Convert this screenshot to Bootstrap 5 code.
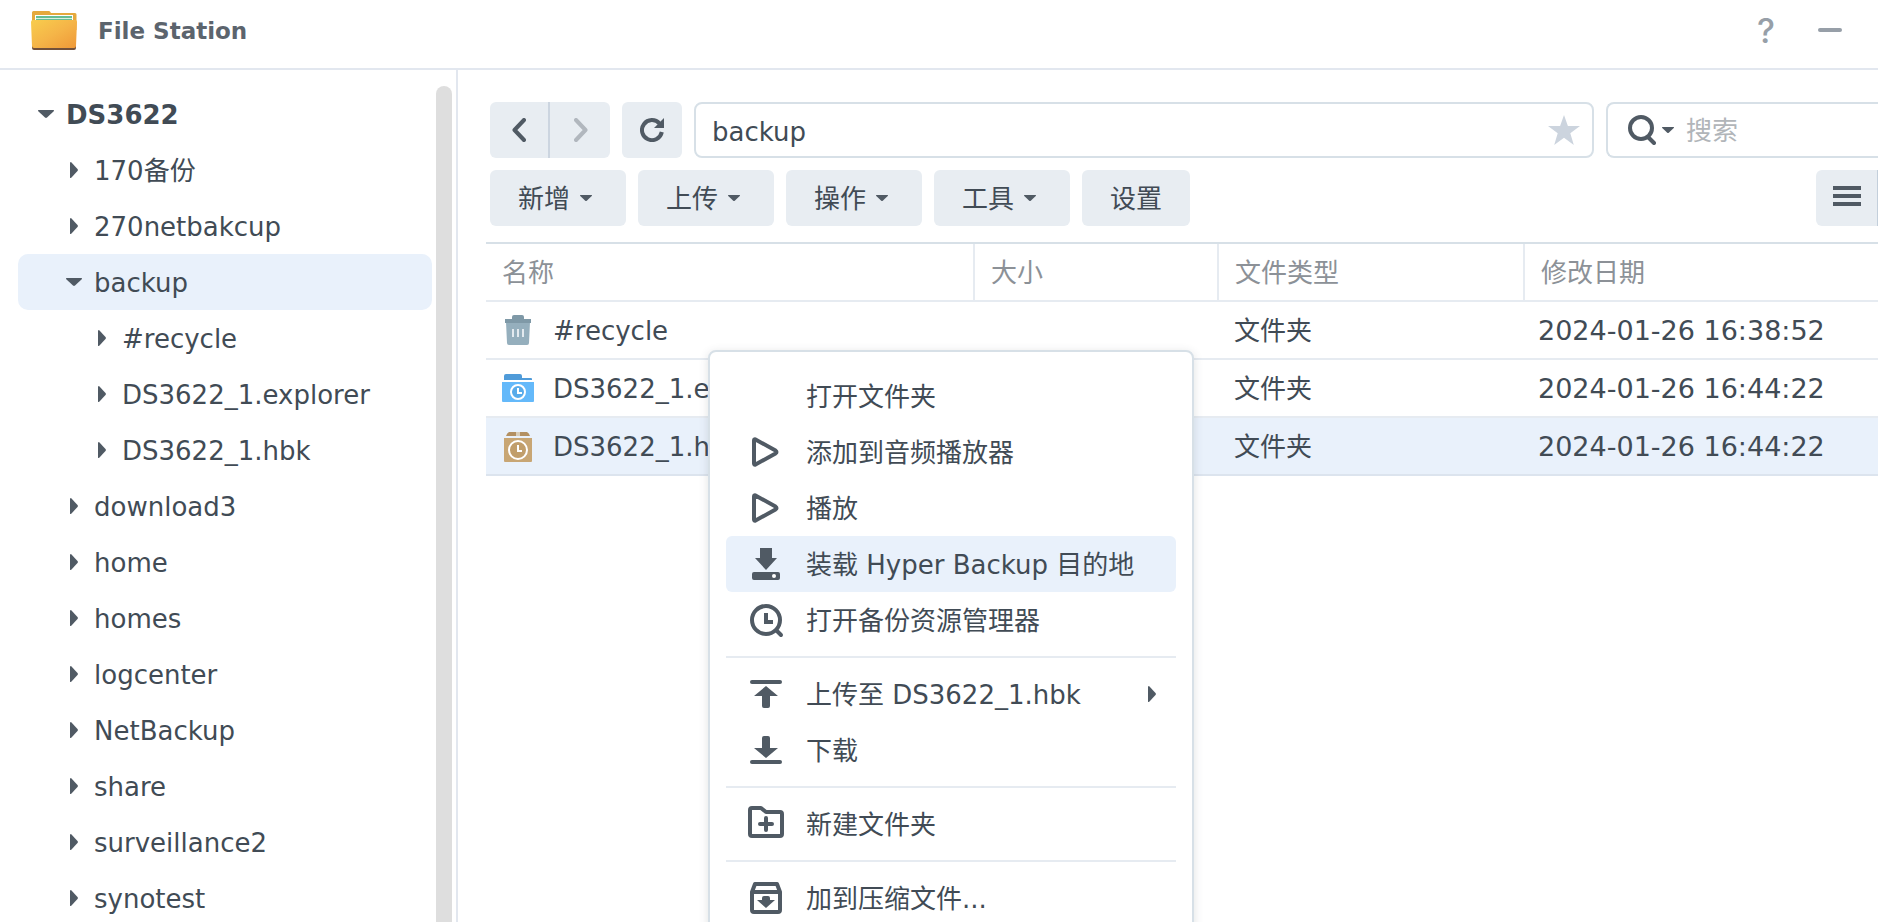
<!DOCTYPE html>
<html lang="zh-CN">
<head>
<meta charset="utf-8">
<meta name="viewport" content="width=device-width, initial-scale=1">
<title>File Station</title>
<link href="https://cdn.jsdelivr.net/npm/bootstrap@5.3.0/dist/css/bootstrap.min.css" rel="stylesheet">
<style>
  :root { --ink: #414b55; --icon: #505a64; --line: #e6ebf1; --frame: #d7e0e7; --face: #e8edf2; --pick: #e9f1fb; }
  body { font-family: "DejaVu Sans", "Noto Sans CJK SC", sans-serif; font-size: 26px; line-height: 36px; color: var(--ink); background: #fff; }
  button { font: inherit; color: inherit; }
  svg { display: block; flex: none; }

  .titlebar { padding: 0 36px 8px 30px; height: 70px; border-bottom: 2px solid #e2e7ef; gap: 20px; }
  .app-name { font-size: 23px; font-weight: 700; color: #5c646d; padding-top: 2px; }
  .win-btns { gap: 40px; }
  .win-btns button { width: 24px; }
  .win-btns .help-btn { font-family: Inter, sans-serif; font-size: 34px; font-weight: 500; color: #979fa8; }

  .sidebar { width: 458px; border-right: 2px solid #e2e7ef; padding: 16px 4px 0 18px; gap: 4px; }
  .tree a { height: 56px; border-radius: 10px; padding: 2px 0 0 14px; gap: 6px; color: inherit; }
  .tree a.depth1 { padding-left: 42px; }
  .tree a.depth2 { padding-left: 70px; }
  .tree a.picked { background: var(--pick); }
  .twist { width: 28px; }
  .track { width: 16px; border-radius: 8px 8px 0 0; background: #dedede; }
  .tree svg, .tool svg, .ctx svg, .fname svg { margin-bottom: 2px; }

  .pane { padding: 32px 0 0 28px; }
  .bar { gap: 12px; padding-left: 4px; margin-bottom: 12px; }
  .tool { height: 56px; border: 0; border-radius: 6px; background: var(--face); padding: 2px 28px 0; gap: 10px; display: flex; align-items: center; justify-content: center; }
  .tool.menu-tool { padding-right: 34px; }
  .tool.square { width: 60px; padding: 2px 0 0; }
  .tool.back { border-right: 2px solid #ccd5e0; border-radius: 6px 0 0 6px; }
  .tool.next { padding-left: 2px; border-radius: 0 6px 6px 0; }
  .tool.view { width: 62px; padding: 2px 0 0; border-right: 1px solid #c3cfdb; border-radius: 6px 0 0 6px; }
  .field { height: 56px; border: 2px solid var(--frame); border-radius: 8px; }
  .field input { border: 0; outline: 0; background: none; color: inherit; padding: 2px 0 0; min-width: 0; }
  .field input::placeholder { color: #b1b5b9; opacity: 1; }
  .path-field { padding: 0 12px 0 16px; }
  .path-field input { padding-top: 4px; }
  .search-field { width: 272px; border-right: 0; border-radius: 8px 0 0 8px; padding-left: 20px; }
  .search-btn { gap: 6px; margin-right: 12px; }

  .files { table-layout: fixed; border-collapse: separate; border-spacing: 0; margin: 16px 0 0; border-top: 2px solid var(--frame); }
  .files th { height: 58px; padding: 2px 0 0 16px; font-weight: 400; color: #8c9197; border-bottom: 2px solid var(--line); border-right: 2px solid var(--line); }
  .files th:last-child { border-right: 0; }
  .files td { height: 58px; padding: 2px 0 0 15px; border-bottom: 2px solid var(--line); color: inherit; }
  .files td:first-child { padding-left: 16px; }
  .files td.stamp { font-size: 27px; padding-left: 13px; }
  .files tr.picked td { background: var(--pick); border-color: #dce4ee; }
  .col-name { width: 489px; } .col-size { width: 244px; } .col-type { width: 306px; }
  .fname { gap: 19px; }

  .ctx { left: 250px; top: 280px; width: 486px; padding: 16px; border: 2px solid var(--frame); border-radius: 8px; background: #fff; box-shadow: 0 2px 10px rgba(60, 70, 80, .16); }
  .ctx button { height: 56px; width: 100%; border: 0; background: none; border-radius: 6px; padding: 2px 20px 0 22px; gap: 22px; display: flex; align-items: center; text-align: left; }
  .ctx button.picked { background: var(--pick); }
  .ctx hr { margin: 8px 0; border-top: 2px solid var(--line); opacity: 1; }
  .ctx .glyph { width: 36px; height: 36px; color: var(--icon); }
</style>
</head>
<body class="vh-100 overflow-hidden d-flex flex-column">
<svg width="0" height="0" class="position-absolute" aria-hidden="true">
  <symbol id="right" viewBox="0 0 8 16"><path fill="#505a64" d="M0 0.500Q0 0 1 0L7.500 7Q8.300 8 7.500 9L1 16Q0 16 0 15.500Z"/></symbol>
  <symbol id="down" viewBox="0 0 16 8"><path fill="#505a64" d="M.5 0H15.500Q16 0 16 1L9 7.500Q8 8.300 7 7.500L0 1Q0 0 .5 0Z"/></symbol>
  <symbol id="play" viewBox="0 0 36 36"><path fill="none" stroke="currentColor" stroke-width="4" stroke-linejoin="round" d="M6 6.500Q6 5 7.500 5.500L27.500 16.500Q29.500 18 27.500 19.500L7.500 30.500Q6 31 6 29.500Z"/></symbol>
</svg>

<header class="titlebar d-flex align-items-center flex-shrink-0">
  <svg width="48" height="44" viewBox="0 0 48 44" aria-hidden="true">
    <defs><linearGradient id="fold" x1="0" y1="0" x2="1" y2="1"><stop offset="0" stop-color="#f8cd4d"/><stop offset=".5" stop-color="#f5b548"/><stop offset="1" stop-color="#ef9838"/></linearGradient></defs>
    <path fill="#e5a93d" d="M2 4.500Q2 3 3.500 3H19Q20 3 21 5H45Q46.500 5 46.500 6.500V22H2Z"/>
    <path fill="#fff" d="M5 7H43V14H5Z"/><path fill="#67bd93" d="M6 8H42V14H6Z"/><path fill="#d9f0df" d="M6 10H42V11H6Z"/>
    <path fill="#72503a" d="M2 38H46V40Q46 42 44 42H4Q2 42 2 40Z"/>
    <path fill="url(#fold)" d="M1 14Q1 12 3 12H45Q47 12 47 14L46 38Q46 40 44 40H4Q2 40 2 38Z"/>
  </svg>
  <span class="app-name">File Station</span>
  <div class="win-btns d-flex align-items-center ms-auto">
    <button class="help-btn btn p-0 border-0" type="button" aria-label="Help">?</button>
    <button class="btn p-0 border-0" type="button" aria-label="Minimize"><svg width="24" height="4"><rect width="24" height="4" rx="2" fill="#979fa8"/></svg></button>
  </div>
</header>

<div class="d-flex flex-grow-1 overflow-hidden">
  <aside class="sidebar d-flex flex-shrink-0 overflow-hidden">
    <nav class="tree d-flex flex-column flex-grow-1">
      <a href="#" class="d-flex align-items-center flex-shrink-0 text-decoration-none fw-bold"><svg class="twist" height="8"><use href="#down" x="6" width="16" height="8"/></svg>DS3622</a>
      <a href="#" class="depth1 d-flex align-items-center flex-shrink-0 text-decoration-none"><svg class="twist" height="16"><use href="#right" x="10" width="8" height="16"/></svg>170备份</a>
      <a href="#" class="depth1 d-flex align-items-center flex-shrink-0 text-decoration-none"><svg class="twist" height="16"><use href="#right" x="10" width="8" height="16"/></svg>270netbakcup</a>
      <a href="#" class="depth1 picked d-flex align-items-center flex-shrink-0 text-decoration-none"><svg class="twist" height="8"><use href="#down" x="6" width="16" height="8"/></svg>backup</a>
      <a href="#" class="depth2 d-flex align-items-center flex-shrink-0 text-decoration-none"><svg class="twist" height="16"><use href="#right" x="10" width="8" height="16"/></svg>#recycle</a>
      <a href="#" class="depth2 d-flex align-items-center flex-shrink-0 text-decoration-none"><svg class="twist" height="16"><use href="#right" x="10" width="8" height="16"/></svg>DS3622_1.explorer</a>
      <a href="#" class="depth2 d-flex align-items-center flex-shrink-0 text-decoration-none"><svg class="twist" height="16"><use href="#right" x="10" width="8" height="16"/></svg>DS3622_1.hbk</a>
      <a href="#" class="depth1 d-flex align-items-center flex-shrink-0 text-decoration-none"><svg class="twist" height="16"><use href="#right" x="10" width="8" height="16"/></svg>download3</a>
      <a href="#" class="depth1 d-flex align-items-center flex-shrink-0 text-decoration-none"><svg class="twist" height="16"><use href="#right" x="10" width="8" height="16"/></svg>home</a>
      <a href="#" class="depth1 d-flex align-items-center flex-shrink-0 text-decoration-none"><svg class="twist" height="16"><use href="#right" x="10" width="8" height="16"/></svg>homes</a>
      <a href="#" class="depth1 d-flex align-items-center flex-shrink-0 text-decoration-none"><svg class="twist" height="16"><use href="#right" x="10" width="8" height="16"/></svg>logcenter</a>
      <a href="#" class="depth1 d-flex align-items-center flex-shrink-0 text-decoration-none"><svg class="twist" height="16"><use href="#right" x="10" width="8" height="16"/></svg>NetBackup</a>
      <a href="#" class="depth1 d-flex align-items-center flex-shrink-0 text-decoration-none"><svg class="twist" height="16"><use href="#right" x="10" width="8" height="16"/></svg>share</a>
      <a href="#" class="depth1 d-flex align-items-center flex-shrink-0 text-decoration-none"><svg class="twist" height="16"><use href="#right" x="10" width="8" height="16"/></svg>surveillance2</a>
      <a href="#" class="depth1 d-flex align-items-center flex-shrink-0 text-decoration-none"><svg class="twist" height="16"><use href="#right" x="10" width="8" height="16"/></svg>synotest</a>
    </nav>
    <div class="track"></div>
  </aside>

  <main class="pane position-relative flex-grow-1">
    <div class="bar d-flex">
      <div class="d-flex">
        <button type="button" class="tool square back" aria-label="Back"><svg width="14" height="24" viewBox="0 0 14 24"><path d="M12 2L2.500 12L12 22" fill="none" stroke="#505a64" stroke-width="4" stroke-linecap="round" stroke-linejoin="round"/></svg></button>
        <button type="button" class="tool square next" aria-label="Forward"><svg width="14" height="24" viewBox="0 0 14 24"><path d="M2 2L11.500 12L2 22" fill="none" stroke="#b1b7be" stroke-width="4" stroke-linecap="round" stroke-linejoin="round"/></svg></button>
      </div>
      <button type="button" class="tool square" aria-label="Refresh"><svg width="24" height="24" viewBox="0 0 24 24"><path d="M19.500 5.500A10 10 0 1 0 21.800 14" fill="none" stroke="#505a64" stroke-width="4"/><path d="M24 0V10H14Z" fill="#505a64"/></svg></button>
      <div class="field path-field d-flex align-items-center flex-grow-1">
        <input class="flex-grow-1" type="text" value="backup" aria-label="Path">
        <button type="button" class="btn p-0 border-0" aria-label="Favorite"><svg width="32" height="30" viewBox="0 0 32 30"><path fill="#ccd4de" d="M16 0L19.900 11H32L22.300 18.200L25.800 30L16 22.800L6.200 30L9.700 18.200L0 11H12.100Z"/></svg></button>
      </div>
      <div class="field search-field d-flex align-items-center flex-shrink-0">
        <button type="button" class="search-btn btn p-0 border-0 d-flex align-items-center" aria-label="Search options">
          <svg width="28" height="30" viewBox="0 0 28 30"><circle cx="13" cy="13" r="11" fill="none" stroke="#505a64" stroke-width="4"/><path d="M21 23L26 28" stroke="#505a64" stroke-width="4" stroke-linecap="round"/></svg>
          <svg width="12" height="6"><use href="#down" width="12" height="6"/></svg>
        </button>
        <input class="flex-grow-1" type="text" placeholder="搜索" aria-label="搜索">
      </div>
    </div>
    <div class="bar d-flex">
      <button type="button" class="tool menu-tool">新增<svg width="12" height="6"><use href="#down" width="12" height="6"/></svg></button>
      <button type="button" class="tool menu-tool">上传<svg width="12" height="6"><use href="#down" width="12" height="6"/></svg></button>
      <button type="button" class="tool menu-tool">操作<svg width="12" height="6"><use href="#down" width="12" height="6"/></svg></button>
      <button type="button" class="tool menu-tool">工具<svg width="12" height="6"><use href="#down" width="12" height="6"/></svg></button>
      <button type="button" class="tool">设置</button>
      <button type="button" class="tool view ms-auto" aria-label="List view"><svg width="28" height="24" viewBox="0 0 28 24"><path fill="#505a64" d="M0 0H28V4H0ZM0 8H28V12H0ZM0 16H28V20H0Z"/></svg></button>
    </div>

    <table class="files w-100">
      <colgroup><col class="col-name"><col class="col-size"><col class="col-type"><col></colgroup>
      <thead><tr><th>名称</th><th>大小</th><th>文件类型</th><th>修改日期</th></tr></thead>
      <tbody>
        <tr>
          <td><div class="fname d-flex align-items-center">
            <svg width="32" height="32" viewBox="0 0 32 32"><path fill="#95afbd" d="M4 8H28L27 29Q27 31 25 31H7Q5 31 5 29Z"/><path fill="#7f99a7" d="M3 5H10V3Q10 1 12 1H20Q22 1 22 3V5H29V9H3Z"/><path fill="#e3eaef" d="M10 15H12V23H10ZM15 15H17V23H15ZM20 15H22V23H20Z"/></svg>
            #recycle</div></td>
          <td></td><td>文件夹</td><td class="stamp">2024-01-26 16:38:52</td>
        </tr>
        <tr>
          <td><div class="fname d-flex align-items-center">
            <svg width="32" height="32" viewBox="0 0 32 32"><path fill="#4f9bd9" d="M2 4Q2 2 4 2H18Q20 2 20 4V6H29Q30 6 30 7V8H2Z"/><path fill="#64b9fa" d="M0 10H32V29Q32 30 31 30H1Q0 30 0 29Z"/><circle cx="16" cy="20" r="7" fill="#58abea" stroke="#fff" stroke-width="2"/><path d="M16 16V21H20" fill="none" stroke="#fff" stroke-width="2"/></svg>
            DS3622_1.explorer</div></td>
          <td></td><td>文件夹</td><td class="stamp">2024-01-26 16:44:22</td>
        </tr>
        <tr class="picked">
          <td><div class="fname d-flex align-items-center">
            <svg width="32" height="32" viewBox="0 0 32 32"><path fill="#b39062" d="M7 2H14V6H4Q5 3 7 2Z"/><path fill="#d9cdb9" d="M14 2H18V6H14Z"/><path fill="#b39062" d="M18 2H25Q27 3 28 6H18Z"/><path fill="#c8a674" d="M2 8H30V31Q30 32 29 32H3Q2 32 2 31Z"/><circle cx="16" cy="20" r="9" fill="#c19e6b" stroke="#fff" stroke-width="2"/><path d="M16 15V21H20" fill="none" stroke="#fff" stroke-width="2"/></svg>
            DS3622_1.hbk</div></td>
          <td></td><td>文件夹</td><td class="stamp">2024-01-26 16:44:22</td>
        </tr>
      </tbody>
    </table>

    <div class="ctx position-absolute">
      <button type="button"><span class="glyph"></span>打开文件夹</button>
      <button type="button"><svg class="glyph"><use href="#play"/></svg>添加到音频播放器</button>
      <button type="button"><svg class="glyph"><use href="#play"/></svg>播放</button>
      <button type="button" class="picked"><svg class="glyph" viewBox="0 0 36 36"><path fill="currentColor" d="M12 2H24V12H29L18 24L7 12H12ZM6 26H30Q32 26 32 28V32Q32 34 30 34H6Q4 34 4 32V28Q4 26 6 26Z"/><circle cx="26" cy="30" r="2" fill="#fff"/></svg>装载 Hyper Backup 目的地</button>
      <button type="button"><svg class="glyph" viewBox="0 0 36 36" fill="none" stroke="currentColor" stroke-width="4" stroke-linecap="round"><circle cx="18" cy="18" r="14"/><path d="M29 29L33 33"/><path d="M18 11V20H25" stroke-linecap="butt"/></svg>打开备份资源管理器</button>
      <hr>
      <button type="button"><svg class="glyph" viewBox="0 0 36 36" fill="currentColor"><rect x="2" y="4" width="32" height="4" rx="2"/><path d="M18 10L30 20H22V30Q22 32 20 32H16Q14 32 14 30V20H6Z"/></svg>上传至 DS3622_1.hbk<svg class="ms-auto" width="8" height="16"><use href="#right" width="8" height="16"/></svg></button>
      <button type="button"><svg class="glyph" viewBox="0 0 36 36" fill="currentColor"><rect x="2" y="28" width="32" height="4" rx="2"/><path d="M18 26L30 16H22V6Q22 4 20 4H16Q14 4 14 6V16H6Z"/></svg>下载</button>
      <hr>
      <button type="button"><svg class="glyph" viewBox="0 0 36 36" fill="none" stroke="currentColor" stroke-width="4" stroke-linecap="round" stroke-linejoin="round"><path d="M2 4Q2 2 4 2H13L18 6H32Q34 6 34 8V28Q34 30 32 30H4Q2 30 2 28Z"/><path d="M12 18H24M18 12V24"/></svg>新建文件夹</button>
      <hr>
      <button type="button"><svg class="glyph" viewBox="0 0 36 36"><path d="M4 12L7 4H29L32 12V30Q32 32 30 32H6Q4 32 4 30ZM4 12H32" fill="none" stroke="currentColor" stroke-width="4" stroke-linejoin="round"/><path fill="currentColor" d="M14 18Q14 16 16 16H20Q22 16 22 18V20H27L18 28L9 20H14Z"/></svg>加到压缩文件...</button>
    </div>
  </main>
</div>
<script src="https://cdn.jsdelivr.net/npm/bootstrap@5.3.0/dist/js/bootstrap.bundle.min.js"></script>
</body>
</html>
